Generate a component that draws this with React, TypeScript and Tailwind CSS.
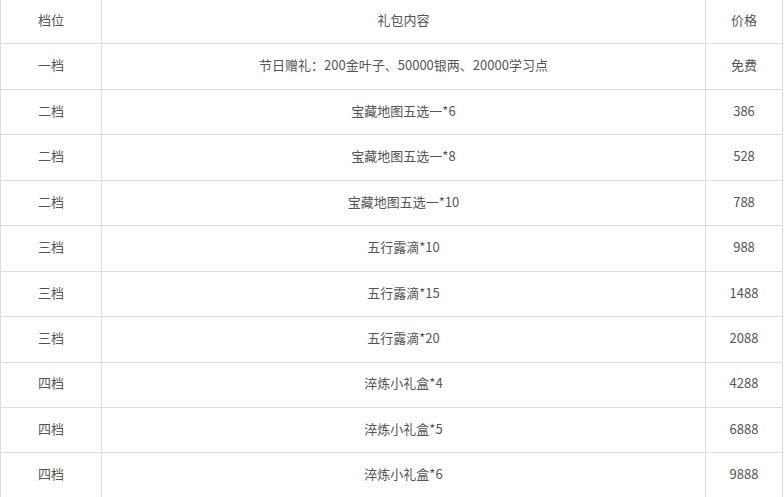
const rows: [string, string, string][] = [
  ["一档", "节日赠礼：200金叶子、50000银两、20000学习点", "免费"],
  ["二档", "宝藏地图五选一*6", "386"],
  ["二档", "宝藏地图五选一*8", "528"],
  ["二档", "宝藏地图五选一*10", "788"],
  ["三档", "五行露滴*10", "988"],
  ["三档", "五行露滴*15", "1488"],
  ["三档", "五行露滴*20", "2088"],
  ["四档", "淬炼小礼盒*4", "4288"],
  ["四档", "淬炼小礼盒*5", "6888"],
  ["四档", "淬炼小礼盒*6", "9888"],
];

export default function App() {
  return (
    <div className="w-[784px] h-[497px] overflow-hidden bg-white">
      <table
        className="w-[783px] -mt-[2px] border-collapse text-center text-[13px] text-[#555]"
        style={{ fontFamily: '"Microsoft YaHei", "Noto Sans CJK SC", sans-serif' }}
      >
        <colgroup>
          <col className="w-[101px]" />
          <col />
          <col className="w-[77px]" />
        </colgroup>
        <thead>
          <tr className="h-[45.44px]">
            <td className="border border-[#dddddd] p-0 pb-[3px]">档位</td>
            <td className="border border-[#dddddd] p-0 pb-[3px]">礼包内容</td>
            <td className="border border-[#dddddd] p-0 pb-[3px]">价格</td>
          </tr>
        </thead>
        <tbody>
          {rows.map((r, i) => (
            <tr key={i} className="h-[45.44px]">
              <td className="border border-[#dddddd] p-0 pb-[3px]">{r[0]}</td>
              <td className="border border-[#dddddd] p-0 pb-[3px]">{r[1]}</td>
              <td className="border border-[#dddddd] p-0 pb-[3px]">{r[2]}</td>
            </tr>
          ))}
        </tbody>
      </table>
    </div>
  );
}
